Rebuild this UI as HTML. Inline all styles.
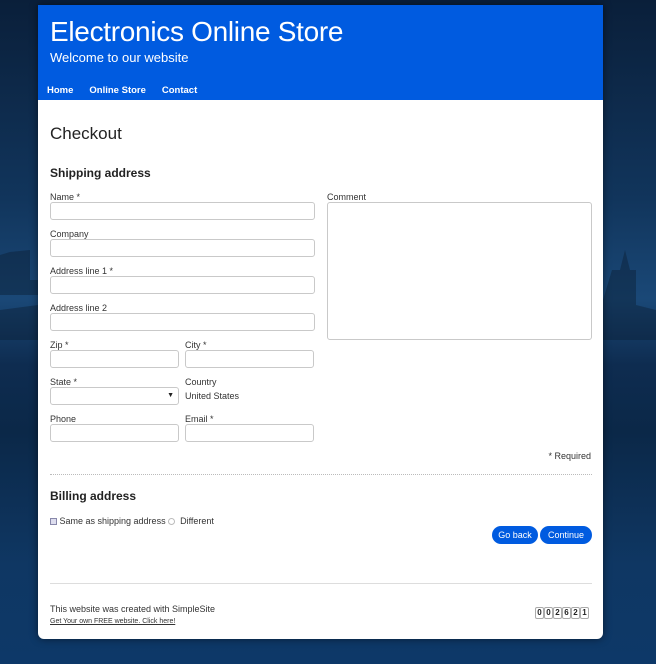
<!DOCTYPE html>
<html><head><style>
*{box-sizing:border-box;margin:0;padding:0}
body{width:656px;height:664px;overflow:hidden;font-family:"Liberation Sans",sans-serif;color:#222;
background:linear-gradient(180deg,#0a1f3a 0%,#11355c 30%,#1a4877 45%,#0e2c50 55%,#0b2848 65%,#0f3763 85%,#0d3868 100%);position:relative}
.sky{position:absolute;left:0;right:0;top:230px;height:110px}
#page{position:absolute;left:38px;top:5px;width:565px;height:634px;background:#fff;border-radius:0 0 6px 6px;box-shadow:0 0 8px rgba(0,0,0,.5)}
#hdr{background:#005be0;height:95px;color:#fff;position:relative}
#hdr h1{position:absolute;left:12px;top:11px;font-size:28px;font-weight:normal;letter-spacing:-.3px}
#hdr .sub{position:absolute;left:12px;top:45px;font-size:13px}
#nav{position:absolute;left:9px;top:80px;font-size:9.5px;font-weight:bold}
#nav span{margin-right:16px}
.abs{position:absolute}
.lbl{font-size:9px;color:#333}
.in{position:absolute;border:1px solid #c9c9c9;border-radius:3px;height:18px;background:#fff}
h2{font-size:17px;font-weight:normal}
h3{font-size:12px;font-weight:bold}
.btn{position:absolute;top:521px;height:18px;background:#005be0;color:#fff;font-size:9px;border-radius:9px;text-align:center;line-height:18px}
.cnt span{display:inline-block;width:9px;height:12px;border:1px solid #aaa;border-radius:2px;font-size:8px;text-align:center;line-height:10px;margin-right:0px;font-weight:bold}
</style></head><body>
<svg class="sky" width="656" height="110" viewBox="0 0 656 110"><path fill="#0a1e36" d="M0 25 L10 22 L30 20 L30 50 L45 50 L45 65 L0 65Z M0 80 L38 75 L38 110 L0 110Z M603 70 L612 40 L620 40 L625 20 L630 40 L636 40 L636 75 L656 80 L656 110 L603 110Z" opacity=".45"/></svg>
<div id="page">
<div id="hdr"><h1>Electronics Online Store</h1><div class="sub">Welcome to our website</div>
<div id="nav"><span>Home</span><span>Online Store</span><span>Contact</span></div></div>
<h2 class="abs" style="left:12px;top:119px">Checkout</h2>
<h3 class="abs" style="left:12px;top:161px">Shipping address</h3>
<div class="abs lbl" style="left:12px;top:187px">Name *</div><div class="in" style="left:12px;top:197px;width:265px"></div>
<div class="abs lbl" style="left:12px;top:224px">Company</div><div class="in" style="left:12px;top:234px;width:265px"></div>
<div class="abs lbl" style="left:12px;top:261px">Address line 1 *</div><div class="in" style="left:12px;top:271px;width:265px"></div>
<div class="abs lbl" style="left:12px;top:298px">Address line 2</div><div class="in" style="left:12px;top:308px;width:265px"></div>
<div class="abs lbl" style="left:12px;top:335px">Zip *</div><div class="in" style="left:12px;top:345px;width:129px"></div>
<div class="abs lbl" style="left:147px;top:335px">City *</div><div class="in" style="left:147px;top:345px;width:129px"></div>
<div class="abs lbl" style="left:12px;top:372px">State *</div><div class="in" style="left:12px;top:382px;width:129px"><span style="position:absolute;right:4px;top:4px;font-size:7px">▼</span></div>
<div class="abs lbl" style="left:147px;top:372px">Country</div><div class="abs lbl" style="left:147px;top:386px">United States</div>
<div class="abs lbl" style="left:12px;top:409px">Phone</div><div class="in" style="left:12px;top:419px;width:129px"></div>
<div class="abs lbl" style="left:147px;top:409px">Email *</div><div class="in" style="left:147px;top:419px;width:129px"></div>
<div class="abs lbl" style="left:289px;top:187px">Comment</div><div class="in" style="left:289px;top:197px;width:265px;height:138px"></div>
<div class="abs lbl" style="right:12px;top:446px">* Required</div>
<div class="abs" style="left:12px;top:469px;width:542px;border-top:1px dotted #bbb"></div>
<h3 class="abs" style="left:12px;top:484px">Billing address</h3>
<div class="abs lbl" style="left:12px;top:511px"><span style="display:inline-block;width:7px;height:7px;border:1px solid #88a;background:#dde;vertical-align:-1px"></span> Same as shipping address <span style="display:inline-block;width:7px;height:7px;border:1px solid #bbb;border-radius:50%;vertical-align:-1px"></span> &nbsp;Different</div>
<div class="btn" style="left:454px;width:46px">Go back</div>
<div class="btn" style="left:502px;width:52px">Continue</div>
<div class="abs" style="left:12px;top:578px;width:542px;border-top:1px solid #ddd"></div>
<div class="abs lbl" style="left:12px;top:599px">This website was created with SimpleSite</div>
<div class="abs" style="left:12px;top:613px;font-size:7px;text-decoration:underline;color:#333">Get Your own FREE website. Click here!</div>
<div class="abs cnt" style="left:497px;top:597px"><span>0</span><span>0</span><span>2</span><span>6</span><span>2</span><span>1</span></div>
</div>
</body></html>
